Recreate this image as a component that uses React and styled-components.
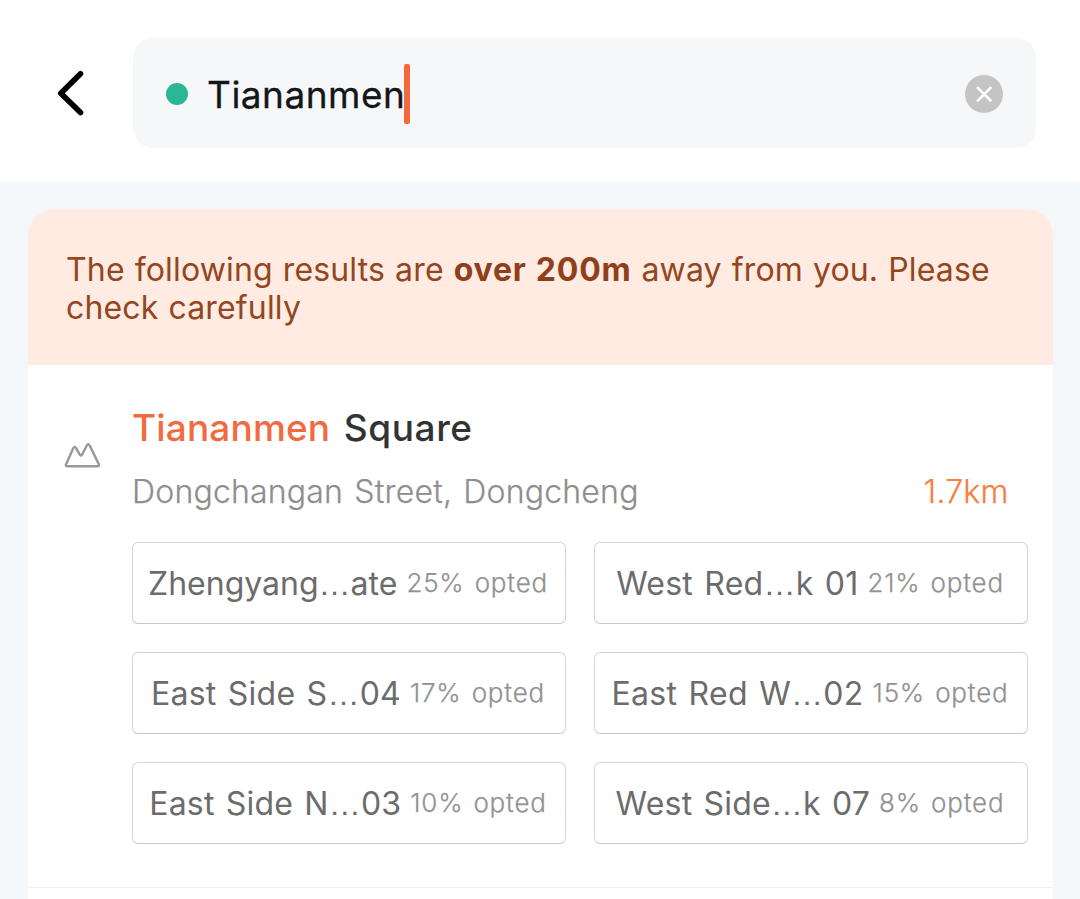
import React from 'react';
import styled, { createGlobalStyle } from 'styled-components';

const Global = createGlobalStyle`
  * { box-sizing: border-box; }
  body { margin: 0; background: #f4f7f9; font-family: Inter, "Liberation Sans", sans-serif; overflow: hidden; }
`;

const Page = styled.main`
  height: 899px;
  display: flex;
  flex-direction: column;
  overflow: hidden;
`;

const Header = styled.header`
  height: 182px;
  flex: none;
  background: #fff;
  display: flex;
  align-items: flex-start;
  padding: 38px 44px 0 56px;
`;

const BackButton = styled.button`
  width: 77px;
  height: 110px;
  flex: none;
  padding: 0;
  border: 0;
  background: none;
  display: flex;
  align-items: center;
`;

const SearchField = styled.div`
  flex: 1;
  height: 110px;
  border-radius: 20px;
  background: #f5f7f9;
  display: flex;
  align-items: center;
  padding: 1px 33px 0;
`;

const Dot = styled.span`
  width: 22px;
  height: 22px;
  border-radius: 50%;
  background: #2bb793;
  margin-right: 19px;
`;

const Query = styled.span`
  width: 197px;
  padding-top: 3px;
  font-size: 37px;
  line-height: 44px;
  letter-spacing: 0.5px;
  color: #151618;
  -webkit-text-stroke: 0.3px #151618;
`;

const Caret = styled.span`
  width: 5.5px;
  height: 60px;
  border-radius: 2px;
  background: #f5683b;
`;

const Clear = styled.button`
  margin-left: auto;
  padding: 0;
  border: 0;
  background: none;
  display: flex;
`;

const Card = styled.section`
  margin: 27px 27.5px 0 28px;
  flex: 1;
  background: #fff;
  border-radius: 26px 26px 0 0;
  overflow: hidden;
`;

const Notice = styled.div`
  height: 156px;
  background: #ffebe2;
  padding: 41.5px 0 0 38px;
  font-size: 32px;
  line-height: 38.5px;
  letter-spacing: 0.16px;
  word-spacing: 0.8px;
  color: #934620;
  white-space: nowrap;

  b { font-weight: 700; letter-spacing: 0.8px; color: #8f401b; }
`;

const Result = styled.article`
  height: 523px;
  display: flex;
  border-bottom: 1px solid #f1f1f1;
  padding: 40px 0 0 36px;
`;

const PlaceIcon = styled.div`
  width: 68px;
  flex: none;
  padding-top: 36px;
`;

const Details = styled.div`
  flex: 1;
`;

const Title = styled.h2`
  margin: 0;
  height: 44px;
  padding-top: 1px;
  font-size: 37px;
  line-height: 44px;
  font-weight: 500;
  letter-spacing: 0.6px;
  word-spacing: 3px;
  color: #333;

  em { font-style: normal; letter-spacing: 0.15px; color: #f26a40; }
`;

const Meta = styled.div`
  height: 44px;
  margin-top: 19px;
  padding: 2px 44px 0 0;
  display: flex;
  align-items: center;
  justify-content: space-between;
  font-size: 32px;
  font-weight: 300;
  letter-spacing: 0.2px;
  word-spacing: 2px;
  color: #8e8e8e;
  -webkit-text-stroke: 0.25px currentColor;
`;

const Distance = styled.span`
  color: #f5803f;
`;

const Options = styled.div`
  margin-top: 30px;
  display: grid;
  grid-template-columns: 434px 434px;
  grid-auto-rows: 82px;
  gap: 28px;
`;

const Option = styled.button`
  display: flex;
  align-items: center;
  justify-content: center;
  gap: 9px;
  padding: 0 2px 0 0;
  border: 1px solid #d4d4d4;
  border-bottom-color: #c8c8c8;
  border-radius: 6px;
  background: #fff;
  font: inherit;
  white-space: nowrap;
`;

const Name = styled.span`
  padding-top: 2px;
  font-size: 32px;
  line-height: 40px;
  letter-spacing: ${p => p.$tracking}px;
  word-spacing: 2px;
  color: #6c6c6c;
`;

const Ellipsis = styled.span`
  font-family: "Liberation Sans", sans-serif;
`;

const Share = styled.span`
  margin-top: -1px;
  font-size: 26px;
  font-weight: 300;
  letter-spacing: 0.8px;
  word-spacing: 2px;
  color: #929292;
  -webkit-text-stroke: 0.25px currentColor;
`;

const options = [
  { start: 'Zhengyang', end: 'ate', share: '25% opted', tracking: 0 },
  { start: 'West Red', end: 'k 01', share: '21% opted', tracking: 0.25 },
  { start: 'East Side S', end: '04', share: '17% opted', tracking: 0.25 },
  { start: 'East Red W', end: '02', share: '15% opted', tracking: 0.3 },
  { start: 'East Side N', end: '03', share: '10% opted', tracking: 0.2 },
  { start: 'West Side', end: 'k 07', share: '8% opted', tracking: 0.2 },
];

export default function App() {
  return (
    <Page>
      <Global />
      <Header>
        <BackButton aria-label="Back">
          <svg width="30" height="48" viewBox="0 0 30 48" fill="none" stroke="#000" strokeWidth="5.6" strokeLinecap="round" strokeLinejoin="round">
            <path d="M24.5 4.8 4.8 24.3l19.7 19.2" />
          </svg>
        </BackButton>
        <SearchField>
          <Dot />
          <Query>Tiananmen</Query>
          <Caret />
          <Clear aria-label="Clear">
            <svg width="38" height="38" viewBox="0 0 38 38">
              <circle cx="19" cy="19" r="19" fill="#c4c4c5" />
              <path d="m12.8 12.8 12.8 12.8m0-12.8L12.8 25.6" stroke="#fff" strokeWidth="2.6" strokeLinecap="round" />
            </svg>
          </Clear>
        </SearchField>
      </Header>
      <Card>
        <Notice>The following results are <b>over 200m</b> away from you. Please<br />check carefully</Notice>
        <Result>
          <PlaceIcon>
            <svg width="38" height="28" viewBox="0 0 38 28" fill="none" stroke="#999" strokeWidth="2.4" strokeLinejoin="round">
              <path d="M2 23.4 9.2 7.2q1.4-2.6 2.9 0l3.5 6.3q1.2 2.1 2.5 0l4.7-9q1.4-2.6 2.9 0l9.2 18.9q.6 1.8-1.2 1.8H3q-1.7 0-1-1.8Z" />
            </svg>
          </PlaceIcon>
          <Details>
            <Title><em>Tiananmen</em> Square</Title>
            <Meta><span>Dongchangan Street, Dongcheng</span><Distance>1.7km</Distance></Meta>
            <Options>
              {options.map(o => (
                <Option key={o.start}>
                  <Name $tracking={o.tracking}>{o.start}<Ellipsis>…</Ellipsis>{o.end}</Name>
                  <Share>{o.share}</Share>
                </Option>
              ))}
            </Options>
          </Details>
        </Result>
      </Card>
    </Page>
  );
}
